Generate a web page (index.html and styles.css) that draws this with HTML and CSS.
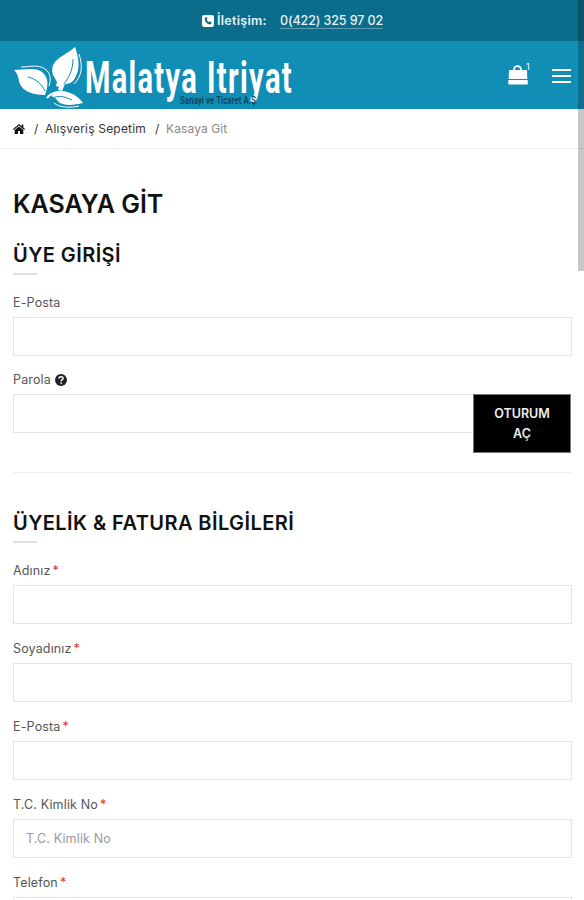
FILE: index.html
```html
<!DOCTYPE html>
<html lang="tr">
<head>
  <meta charset="UTF-8">
  <meta name="viewport" content="width=device-width, initial-scale=1.0">
  <title>Kasaya Git</title>
  <link rel="stylesheet" href="styles.css">
</head>
<body>
  <div class="topbar">
    <svg class="phone-icon" viewBox="0 0 12 12">
      <rect width="12" height="12" rx="2.2" fill="#fff"/>
      <path d="M3.2 2.4 4.6 2l.9 1.900-.9.8c.4 1 1.200 1.800 2.300 2.500l.8-.9 1.900.9-.4 1.500C8.500 10 5.900 9.200 4.500 7.700 3 6.200 2.200 4 3.200 2.400z" fill="#0b6d8c"/>
    </svg>
    <span class="contact-label">İletişim:</span>
    <a class="contact-phone">0(422) 325 97 02</a>
  </div>

  <header class="header">
    <svg class="logo" width="282" height="68" viewBox="0 0 282 68">
      <g fill="#fff">
        <path d="M1 29C10 29 22 26 29 31c6 5 7 12 3 23C22 54 10 51 7 43 5 38 6 34 1 29z"/>
        <path d="M62 6c4 11 5 21 1 29-2 5-5 8-11 8l-3 7-4-1 1-3-3-1 1-4-4-7C36 18 51 16 62 6z"/>
        <path d="M38 55c5-5 13-6 19-3 6 2 10 6 13 10-8 2-17 3-23 0-3-2-3-5-9-7z"/>
      </g>
      <g fill="none" stroke="#fff" stroke-width="1">
        <path d="M8 26c8 0 17-3 24 2 6 4 6 11 4 17"/>
        <path d="M66 13c4 12 3 22-5 30"/>
        <path d="M41 62c6 5 17 5 25 3"/>
        <path d="M34 57c4-6 14-8 21-4" stroke-width="2"/>
      </g>
      <g fill="none" stroke="#118eb6" stroke-width="1">
        <path d="M15 36c8 2 14 7 17 14"/>
        <path d="M60 18c0 11-4 18-9 25"/>
        <path d="M39 57c8-3 14-1 20 2"/>
      </g>
      <g class="logo-name">
        <text x="72" y="52" textLength="113" lengthAdjust="spacingAndGlyphs">Malatya</text>
        <text x="194" y="52" textLength="86" lengthAdjust="spacingAndGlyphs">Itriyat</text>
      </g>
      <text class="logo-sub" x="167" y="63" textLength="76" lengthAdjust="spacingAndGlyphs">Sanayi ve Ticaret A.Ş</text>
    </svg>
    <div class="header-tools">
      <a class="cart">
        <svg width="20" height="22" viewBox="0 0 20 22">
          <path d="M6 10V6c0-5 6-5 7-1v5" fill="none" stroke="#fff" stroke-width="1.800"/>
          <path d="M1 6h18l.3 9H.7zM.3 16h19.400v4.500H.3z" fill="#fff"/>
        </svg>
        <span class="cart-count">1</span>
      </a>
      <a class="menu"><span></span><span></span><span></span></a>
    </div>
  </header>

  <nav class="breadcrumb">
    <svg class="home-icon" viewBox="0 0 12 10">
      <path d="M6 0 0 5l.8.9L6 1.600l5.200 4.300L12 5l-1.700-1.400V.6H8.700v1.600z"/>
      <path d="M6 2.500 1.700 6v4H5V7h2v3h3.300V6z"/>
    </svg>
    <span class="slash">/</span>
    <a class="crumb-cart">Alışveriş Sepetim</a>
    <span class="slash">/</span>
    <span class="crumb-current">Kasaya Git</span>
  </nav>

  <main class="content">
    <h1>KASAYA GİT</h1>

    <section class="login">
      <h2 class="login-title">ÜYE GİRİŞİ</h2>
      <div class="field">
        <label>E-Posta</label>
        <input type="text">
      </div>
      <div class="field">
        <label>Parola <svg class="help-icon" viewBox="0 0 12 12"><circle cx="6" cy="6" r="6" fill="#222"/><path d="M4 4.500c.1-2.400 4.200-2.300 4 0C7.900 5.800 6.200 5.700 6.200 7.300M6.200 8.300v1.500" fill="none" stroke="#fff" stroke-width="1.500"/></svg></label>
        <div class="password-row">
          <input type="password">
          <button>OTURUM AÇ</button>
        </div>
      </div>
    </section>

    <section class="billing">
      <h2 class="billing-title">ÜYELİK &amp; FATURA BİLGİLERİ</h2>
      <div class="field">
        <label>Adınız<em>*</em></label>
        <input type="text">
      </div>
      <div class="field">
        <label>Soyadınız<em>*</em></label>
        <input type="text">
      </div>
      <div class="field">
        <label>E-Posta<em>*</em></label>
        <input type="text">
      </div>
      <div class="field">
        <label>T.C. Kimlik No<em>*</em></label>
        <input type="text" placeholder="T.C. Kimlik No">
      </div>
      <div class="field">
        <label>Telefon<em>*</em></label>
        <input type="text">
      </div>
    </section>
  </main>

  <div class="scroll-thumb"></div>
</body>
</html>
```

FILE: styles.css
```css
* {
  box-sizing: border-box;
  margin: 0;
  padding: 0;
}
html {
  height: 900px;
  overflow: hidden;
}
body {
  position: relative;
  height: 900px;
  overflow: hidden;
  background: #fff;
  color: #555;
  font-family: Inter, "Liberation Sans", sans-serif;
  font-size: 12.5px;
  letter-spacing: 0.15px;
}

/* top bar */
.topbar {
  display: flex;
  align-items: center;
  height: 41px;
  padding-left: 202px;
  background: #0b6d8c;
  color: #e6f2f6;
  font-weight: 500;
}
.phone-icon {
  width: 12px;
  height: 12px;
  margin-right: 3px;
}
.contact-label {
  width: 63px;
  font-weight: 600;
  letter-spacing: 0.3px;
}
.contact-phone {
  border-bottom: 1px solid #5d9fb5;
  letter-spacing: -0.1px;
}

/* header */
.header {
  display: flex;
  justify-content: space-between;
  height: 68px;
  padding: 0 13px 0 13px;
  background: #118eb6;
}
.logo {
  overflow: visible;
}
.logo-name {
  fill: #fff;
  font-family: Roboto, sans-serif;
  font-size: 44px;
  font-weight: 700;
  letter-spacing: 2px;
}
.logo-sub {
  fill: #0b3e57;
  font-family: Roboto, sans-serif;
  font-size: 11px;
  font-weight: 500;
}
.header-tools {
  display: flex;
  align-items: center;
  gap: 23px;
}
.cart {
  position: relative;
  right: 1px;
  height: 22px;
}
.cart-count {
  position: absolute;
  top: -3px;
  left: 18px;
  color: #fff;
  font-size: 9px;
}
.menu {
  display: flex;
  flex-direction: column;
  gap: 4px;
  width: 19px;
  margin-top: 2px;
}
.menu span {
  height: 2px;
  background: #fff;
}

/* breadcrumb */
.breadcrumb {
  display: flex;
  align-items: center;
  height: 40px;
  padding: 0 0 0 13px;
  border-bottom: 1px solid #f0f0f0;
  color: #333;
  font-size: 12px;
  letter-spacing: 0.2px;
}
.home-icon {
  width: 12px;
  height: 10px;
  fill: #111;
}
.slash {
  width: 11px;
  margin-left: 9px;
}
.crumb-current {
  color: #888;
  letter-spacing: 0.1px;
}

/* content */
.content {
  padding: 0 12px 0 13px;
}
h1 {
  margin-top: 38px;
  color: #111;
  font-size: 25px;
  font-weight: 600;
  letter-spacing: 0;
  line-height: 34px;
}
h2 {
  color: #111;
  font-size: 20px;
  font-weight: 600;
  letter-spacing: 0.42px;
  line-height: 28px;
}
h2::after {
  content: "";
  display: block;
  width: 24px;
  height: 2px;
  margin-top: 4px;
  background: #e2e2e2;
}
.login {
  padding-top: 20px;
  padding-bottom: 4px;
  border-bottom: 1px solid #f0f0f0;
}
.login h2,
.billing h2 {
  margin-bottom: 18px;
}
.login .field:first-of-type {
  margin-bottom: 14px;
}
.billing {
  padding-top: 36px;
}
.field {
  margin-bottom: 15px;
}
label {
  display: block;
  height: 24px;
  line-height: 20px;
}
label em {
  margin-left: 2px;
  color: #e03030;
  font-style: normal;
}
.help-icon {
  width: 12px;
  height: 12px;
  vertical-align: -2px;
}
input {
  display: block;
  width: 100%;
  height: 39px;
  padding: 0 12px;
  border: 1px solid #e4e4e4;
  background: #fff;
  font: inherit;
  letter-spacing: inherit;
}
input::placeholder {
  color: #999;
}
.password-row {
  display: flex;
  align-items: flex-start;
  padding-right: 1px;
}
.password-row input {
  flex: 1;
  border-right: none;
}
.password-row button {
  width: 98px;
  height: 59px;
  padding: 0 16px;
  border: 1px solid #777;
  background: #000;
  color: #eee;
  font: 600 12.5px/20px Inter, sans-serif;
}

.scroll-thumb {
  position: absolute;
  top: 0;
  right: 0;
  width: 6px;
  height: 271px;
  background: rgba(0, 0, 0, 0.22);
}
```
